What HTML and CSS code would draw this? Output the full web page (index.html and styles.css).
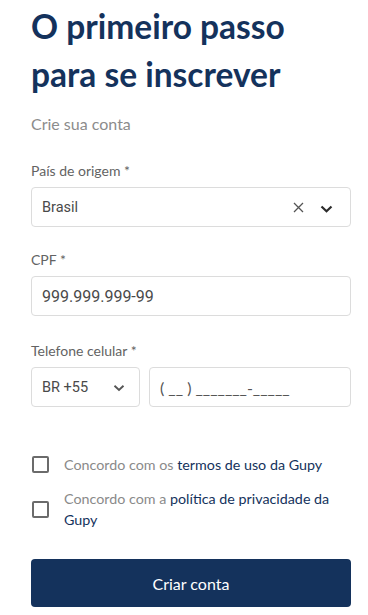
FILE: index.html
```html
<!DOCTYPE html>
<html lang="pt-BR">
<head>
<meta charset="utf-8">
<link rel="stylesheet" href="styles.css">
</head>
<body>
<main class="page">
  <h1 class="title">O primeiro passo para se inscrever</h1>
  <p class="subtitle">Crie sua conta</p>

  <div class="field">
    <label class="label">País de origem *</label>
    <div class="box select">
      <span class="value value-sm">Brasil</span>
      <span class="icons">
        <svg class="clear" width="11" height="11" viewBox="0 0 11 11"><path d="M1 1 L10 10 M10 1 L1 10" stroke="#555" stroke-width="1.3" fill="none"/></svg>
        <svg class="chev" width="13" height="8" viewBox="0 0 13 8"><path d="M1.5 1.5 L6.5 6.3 L11.5 1.5" stroke="#2b2b2b" stroke-width="2.2" fill="none"/></svg>
      </span>
    </div>
  </div>

  <div class="field">
    <label class="label">CPF *</label>
    <div class="box"><span class="value">999.999.999-99</span></div>
  </div>

  <div class="field">
    <label class="label">Telefone celular *</label>
    <div class="phone-row">
      <div class="box ddi">
        <span class="value value-sm">BR +55</span>
        <svg class="chev" width="12" height="8" viewBox="0 0 12 8"><path d="M1.5 1.8 L6 6 L10.5 1.8" stroke="#555" stroke-width="1.9" fill="none"/></svg>
      </div>
      <div class="box phone"><span class="mask">( __ ) _______-_____</span></div>
    </div>
  </div>

  <div class="checks">
    <label class="check">
      <span class="checkbox"></span>
      <span class="check-text">Concordo com os <span class="link">termos de uso da Gupy</span></span>
    </label>
    <label class="check">
      <span class="checkbox"></span>
      <span class="check-text">Concordo com a <span class="link">política de privacidade da</span> <span class="link">Gupy</span></span>
    </label>
  </div>

  <button class="submit">Criar conta</button>
</main>
</body>
</html>
```
FILE: styles.css
```css
* { box-sizing: border-box; }
html, body { margin: 0; padding: 0; background: #fff; }
body { font-family: Lato, "Noto Sans", sans-serif; }

.page {
  padding: 2px 17px 0 31px;
  display: flex;
  flex-direction: column;
}

.title {
  margin: 0;
  font-size: 33.5px;
  line-height: 48px;
  font-weight: 700;
  color: #14325c;
  max-width: 300px;
}

.subtitle {
  margin: 16px 0 0;
  font-size: 16px;
  line-height: 20px;
  color: #8c8c8c;
}

.field {
  display: flex;
  flex-direction: column;
  margin-top: 28px;
}
.field + .field { margin-top: 24px; }
.field + .field + .field { margin-top: 26px; }

.label {
  font-size: 14px;
  line-height: 18px;
  color: #636363;
  margin-bottom: 7px;
}

.box {
  height: 40px;
  border: 1px solid #dcdcdc;
  border-radius: 4px;
  display: flex;
  align-items: center;
  padding: 0 10px;
}

.value {
  font-family: Roboto, "Liberation Sans", sans-serif;
  font-size: 16px;
  color: #4a4a4a;
  flex: 1;
}
.value-sm { font-size: 14.5px; }

.select .icons {
  display: flex;
  align-items: center;
  gap: 16px;
  margin-right: 7px;
}
.select .chev { margin-top: 4px; }

.phone-row {
  display: flex;
  gap: 9px;
}
.ddi { width: 109px; flex: none; padding-right: 14px; }
.ddi .chev { margin-top: 1px; }
.phone { flex: 1; }
.mask {
  font-size: 16px;
  color: #555;
}

.checks {
  margin-top: 47px;
  display: flex;
  flex-direction: column;
  gap: 13px;
}
.check {
  display: flex;
  align-items: center;
  gap: 15px;
}
.checkbox {
  flex: none;
  width: 17px;
  height: 17px;
  border: 2px solid #6b6b6b;
  border-radius: 2px;
  margin-left: 1px;
}
.check-text {
  font-size: 14.3px;
  line-height: 21px;
  color: #8a8a8a;
}
.link {
  color: #14325c;
}

.submit {
  margin-top: 29px;
  height: 48px;
  border: 0;
  border-radius: 4px;
  background: #14325c;
  color: #fff;
  font-family: Lato, sans-serif;
  font-size: 16px;
  width: 100%;
}
```
